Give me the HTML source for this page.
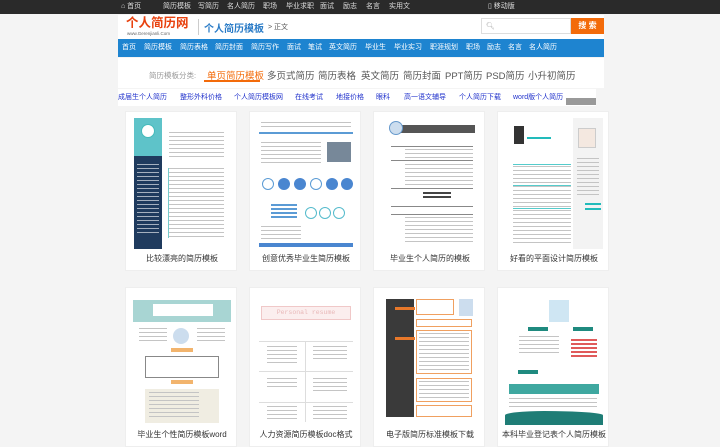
<!DOCTYPE html><html><head><meta charset="utf-8"><style>
*{margin:0;padding:0;box-sizing:border-box}
body{width:720px;height:437px;overflow:hidden;background:#f4f4f4;font-family:"Liberation Sans","Noto Sans CJK SC",sans-serif;position:relative}
.a{position:absolute}
.top{left:0;top:0;width:720px;height:14px;background:#2a2a2a;color:#ddd;font-size:7px;line-height:14px}
.top span{position:absolute}
.hdr{left:118px;top:15px;width:486px;height:24px;background:#fff}
.nav{left:118px;top:39px;width:486px;height:18px;background:#1e84d0;color:#fff;font-size:7px;line-height:18px}
.nav span{position:absolute}
.cat{left:118px;top:58px;width:486px;height:30px;background:#fff;font-size:9.5px;color:#555}
.cat span{position:absolute;top:10px}
.lk{left:118px;top:89px;width:478px;height:17px;background:#fff;font-size:7px;color:#2233cc;line-height:17px}
.lk span{position:absolute}
.card{position:absolute;width:112px;height:160px;background:#fff;border:1px solid #eee}
.card .im{position:absolute;left:7px;top:6px;width:98px;height:131px;background:#f7f7f7;overflow:hidden}
.card .t{position:absolute;left:0;width:112px;text-align:center;top:141px;font-size:8px;color:#333}
.ln{position:absolute;height:1px;background:#bbb}
.tx{position:absolute;background:repeating-linear-gradient(#c4c4c4 0 1px,transparent 1px 4px)}
.tw{position:absolute;background:repeating-linear-gradient(rgba(255,255,255,.6) 0 1px,transparent 1px 4px)}
</style></head><body>
<div class="a top"><span style="left:121px">⌂ 首页</span><span style="left:163px">简历模板</span><span style="left:198px">写简历</span><span style="left:227px">名人简历</span><span style="left:263px">职场</span><span style="left:286px">毕业求职</span><span style="left:320px">面试</span><span style="left:343px">励志</span><span style="left:366px">名言</span><span style="left:389px">实用文</span><span style="left:488px">▯ 移动版</span></div>
<div class="a hdr"></div>
<div class="a" style="left:126px;top:16px;font-size:12.5px;font-weight:bold;color:#e8420f;line-height:15px;white-space:nowrap">个人简历网</div>
<div class="a" style="left:127px;top:31px;font-size:4.5px;color:#666;line-height:5px;white-space:nowrap">www.Gerenjianli.Com</div>
<div class="a" style="left:198px;top:19px;width:1px;height:16px;background:#ccc"></div>
<div class="a" style="left:204px;top:20px;font-size:10px;font-weight:bold;color:#2b7cc7;white-space:nowrap">个人简历模板</div>
<div class="a" style="left:268px;top:22px;font-size:7px;color:#555;white-space:nowrap">&gt; 正文</div>
<div class="a" style="left:481px;top:18px;width:90px;height:16px;border:1px solid #ddd;background:#fff;font-size:7px;color:#aaa;padding:3px 4px">🔍︎</div>
<div class="a" style="left:571px;top:18px;width:33px;height:16px;background:#f36b0a;color:#fff;font-size:8px;font-weight:bold;text-align:center;line-height:16px">搜 索</div>
<div class="a nav"><span style="left:4px">首页</span><span style="left:26px">简历模板</span><span style="left:62px">简历表格</span><span style="left:97px">简历封面</span><span style="left:133px">简历写作</span><span style="left:169px">面试</span><span style="left:190px">笔试</span><span style="left:211px">英文简历</span><span style="left:247px">毕业生</span><span style="left:276px">毕业实习</span><span style="left:312px">职涯规划</span><span style="left:348px">职场</span><span style="left:369px">励志</span><span style="left:390px">名言</span><span style="left:411px">名人简历</span></div>
<div class="a cat"><span style="left:31px;font-size:7.5px;color:#999;top:12px">简历模板分类:</span><span style="left:89px;color:#f36b0a">单页简历模板</span><span style="left:149px">多页式简历</span><span style="left:200px">简历表格</span><span style="left:243px">英文简历</span><span style="left:285px">简历封面</span><span style="left:327px">PPT简历</span><span style="left:368px">PSD简历</span><span style="left:410px">小升初简历</span></div>
<div class="a" style="left:204px;top:80px;width:56px;height:1.5px;background:#f36b0a"></div>
<div class="a lk"><span style="left:0">成届生个人简历</span><span style="left:62px">整形外科价格</span><span style="left:116px">个人简历模板网</span><span style="left:177px">在线考试</span><span style="left:218px">地接价格</span><span style="left:258px">眼科</span><span style="left:286px">高一语文辅导</span><span style="left:341px">个人简历下载</span><span style="left:395px">word版个人简历</span></div>
<div class="a" style="left:566px;top:98px;width:30px;height:7px;background:#999"></div>

<!-- row1 -->
<div class="card" style="left:125px;top:111px"><div class="im" style="background:#fff"><div class="a" style="left:1px;top:0;width:28px;height:131px;background:#1f3b5e"></div><div class="a" style="left:1px;top:0;width:28px;height:38px;background:#5ec3c9"></div><div class="a" style="left:8px;top:6px;width:14px;height:14px;border-radius:50%;background:#fff;border:1px solid #4bb"></div><div class="tw" style="left:4px;top:46px;width:22px;height:70px"></div><div class="tx" style="left:36px;top:14px;width:55px;height:28px"></div><div class="tx" style="left:36px;top:50px;width:55px;height:70px"></div><div class="a" style="left:35px;top:50px;width:1px;height:70px;background:#7cc"></div></div><div class="t">比较漂亮的简历模板</div></div>
<div class="card" style="left:249px;top:111px"><div class="im" style="background:#fff"><div class="tx" style="left:4px;top:4px;width:90px;height:8px"></div><div class="a" style="left:2px;top:14px;width:94px;height:2px;background:#5b9bd5"></div><div class="tx" style="left:4px;top:24px;width:60px;height:22px"></div><div class="a" style="left:70px;top:24px;width:24px;height:20px;background:#789"></div><div class="a" style="left:5px;top:60px;width:12px;height:12px;border-radius:50%;border:1.5px solid #5b9bd5"></div><div class="a" style="left:21px;top:60px;width:12px;height:12px;border-radius:50%;background:#4a86d0"></div><div class="a" style="left:37px;top:60px;width:12px;height:12px;border-radius:50%;background:#4a86d0"></div><div class="a" style="left:53px;top:60px;width:12px;height:12px;border-radius:50%;border:1.5px solid #5b9bd5"></div><div class="a" style="left:69px;top:60px;width:12px;height:12px;border-radius:50%;background:#4a86d0"></div><div class="a" style="left:84px;top:60px;width:12px;height:12px;border-radius:50%;background:#4a86d0"></div><div class="a" style="left:14px;top:86px;width:26px;height:14px;background:repeating-linear-gradient(#5b9bd5 0 2px,transparent 2px 4px)"></div><div class="a" style="left:48px;top:89px;width:12px;height:12px;border-radius:50%;border:1.5px solid #5bc"></div><div class="a" style="left:62px;top:89px;width:12px;height:12px;border-radius:50%;border:1.5px solid #5bc"></div><div class="a" style="left:76px;top:89px;width:12px;height:12px;border-radius:50%;border:1.5px solid #5bc"></div><div class="tx" style="left:4px;top:108px;width:40px;height:14px"></div><div class="a" style="left:2px;top:125px;width:94px;height:4px;background:#4a86d0"></div></div><div class="t">创意优秀毕业生简历模板</div></div>
<div class="card" style="left:373px;top:111px"><div class="im" style="background:#fff"><div class="a" style="left:10px;top:7px;width:84px;height:8px;background:#555"></div><div class="a" style="left:8px;top:3px;width:14px;height:14px;border-radius:50%;background:#cde;border:1px solid #69c"></div><div class="ln" style="left:10px;top:28px;width:82px;background:#888"></div><div class="tx" style="left:24px;top:31px;width:68px;height:10px"></div><div class="ln" style="left:10px;top:42px;width:82px;background:#888"></div><div class="tx" style="left:24px;top:46px;width:68px;height:22px"></div><div class="ln" style="left:10px;top:70px;width:82px;background:#888"></div><div class="a" style="left:42px;top:74px;width:28px;height:2px;background:#444"></div><div class="a" style="left:42px;top:78px;width:28px;height:2px;background:#444"></div><div class="ln" style="left:10px;top:88px;width:82px;background:#888"></div><div class="ln" style="left:10px;top:96px;width:82px;background:#888"></div><div class="tx" style="left:24px;top:99px;width:68px;height:26px"></div></div><div class="t">毕业生个人简历的模板</div></div>
<div class="card" style="left:497px;top:111px"><div class="im" style="background:#fff"><div class="a" style="left:68px;top:0;width:30px;height:131px;background:#f3f3f3"></div><div class="a" style="left:9px;top:8px;width:10px;height:18px;background:#333"></div><div class="a" style="left:73px;top:10px;width:18px;height:20px;background:#f4e8e0;border:1px solid #ccc"></div><div class="a" style="left:22px;top:19px;width:24px;height:2px;background:#2bb"></div><div class="tx" style="left:8px;top:48px;width:58px;height:80px"></div><div class="ln" style="left:8px;top:46px;width:58px;background:#5cc"></div><div class="ln" style="left:8px;top:67px;width:58px;background:#5cc"></div><div class="ln" style="left:8px;top:90px;width:58px;background:#5cc"></div><div class="tx" style="left:72px;top:40px;width:22px;height:40px"></div><div class="a" style="left:80px;top:85px;width:16px;height:2px;background:#2bb"></div><div class="a" style="left:80px;top:90px;width:16px;height:2px;background:#2bb"></div></div><div class="t">好看的平面设计简历模板</div></div>
<!-- row2 -->
<div class="card" style="left:125px;top:287px"><div class="im" style="background:#fff"><div class="a" style="left:0;top:6px;width:98px;height:22px;background:#a8d5d3"></div><div class="a" style="left:20px;top:10px;width:60px;height:12px;background:#fff"></div><div class="tx" style="left:6px;top:34px;width:28px;height:16px"></div><div class="tx" style="left:64px;top:34px;width:28px;height:16px"></div><div class="a" style="left:40px;top:34px;width:16px;height:16px;border-radius:50%;background:#cde"></div><div class="a" style="left:38px;top:54px;width:22px;height:4px;background:#f2b46d"></div><div class="a" style="left:12px;top:62px;width:74px;height:22px;border:1px solid #888"></div><div class="a" style="left:38px;top:86px;width:22px;height:4px;background:#f2b46d"></div><div class="a" style="left:12px;top:95px;width:74px;height:34px;background:#f0ede2"></div><div class="tx" style="left:16px;top:98px;width:50px;height:28px"></div></div><div class="t">毕业生个性简历模板word</div></div>
<div class="card" style="left:249px;top:287px"><div class="im" style="background:#fff"><div class="a" style="left:4px;top:12px;width:90px;height:14px;background:#fbeeee;border:1px solid #f0c8c8;font-family:'Liberation Mono',monospace;font-size:6.5px;color:#e8b8b8;text-align:center;line-height:12px">Personal resume</div><div class="ln" style="left:2px;top:47px;width:94px;background:#ddd"></div><div class="tx" style="left:10px;top:52px;width:30px;height:20px"></div><div class="tx" style="left:56px;top:52px;width:34px;height:16px"></div><div class="ln" style="left:2px;top:77px;width:94px;background:#ddd"></div><div class="tx" style="left:10px;top:84px;width:30px;height:10px"></div><div class="tx" style="left:56px;top:84px;width:34px;height:16px"></div><div class="ln" style="left:2px;top:108px;width:94px;background:#ddd"></div><div class="tx" style="left:10px;top:112px;width:30px;height:14px"></div><div class="tx" style="left:56px;top:112px;width:34px;height:14px"></div><div class="a" style="left:48px;top:48px;width:1px;height:80px;background:#ddd"></div></div><div class="t">人力资源简历模板doc格式</div></div>
<div class="card" style="left:373px;top:287px"><div class="im" style="background:#fff"><div class="a" style="left:5px;top:5px;width:28px;height:118px;background:#3a3a3a"></div><div class="a" style="left:35px;top:5px;width:38px;height:16px;border:1px solid #f0a060"></div><div class="a" style="left:78px;top:5px;width:14px;height:17px;background:#cde"></div><div class="a" style="left:35px;top:25px;width:56px;height:8px;border:1px solid #f0a060"></div><div class="a" style="left:35px;top:36px;width:56px;height:44px;border:1px solid #f0a060"></div><div class="tx" style="left:38px;top:39px;width:50px;height:38px"></div><div class="a" style="left:35px;top:84px;width:56px;height:24px;border:1px solid #f0a060"></div><div class="tx" style="left:38px;top:87px;width:50px;height:18px"></div><div class="a" style="left:35px;top:111px;width:56px;height:12px;border:1px solid #f0a060"></div><div class="a" style="left:14px;top:13px;width:20px;height:3px;background:#e8782a"></div><div class="a" style="left:14px;top:43px;width:20px;height:3px;background:#e8782a"></div></div><div class="t">电子版简历标准模板下载</div></div>
<div class="card" style="left:497px;top:287px"><div class="im" style="background:#fff"><div class="a" style="left:44px;top:6px;width:20px;height:22px;background:#cfe6f3"></div><div class="a" style="left:23px;top:33px;width:20px;height:4px;background:#1f8a7f"></div><div class="a" style="left:68px;top:33px;width:20px;height:4px;background:#1f8a7f"></div><div class="tx" style="left:14px;top:42px;width:40px;height:20px"></div><div class="a" style="left:66px;top:45px;width:26px;height:20px;background:repeating-linear-gradient(#e05a5a 0 2px,#fff 2px 4px)"></div><div class="a" style="left:13px;top:76px;width:20px;height:4px;background:#1f8a7f"></div><div class="a" style="left:4px;top:90px;width:90px;height:10px;background:#3fa8a0"></div><div class="tx" style="left:4px;top:104px;width:88px;height:12px"></div><div class="a" style="left:0;top:117px;width:98px;height:14px;background:#1f7d76;border-radius:40% 60% 0 0/30% 30% 0 0"></div></div><div class="t">本科毕业登记表个人简历模板</div></div>
</body></html>
